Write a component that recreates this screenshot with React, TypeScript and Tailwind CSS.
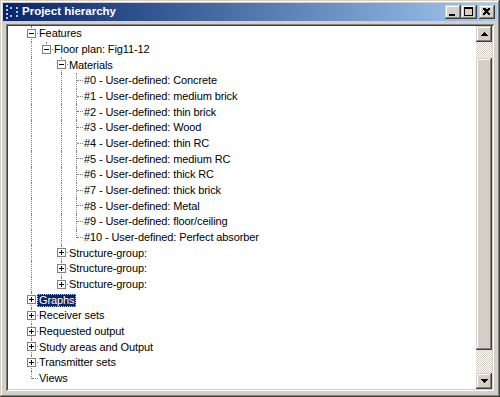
import React from 'react';

type Row = {
  label: string;
  depth: number;
  box?: 'minus' | 'plus';
  last?: boolean;
  cont: boolean[];
  selected?: boolean;
};

const materials = [
  'Concrete',
  'medium brick',
  'thin brick',
  'Wood',
  'thin RC',
  'medium RC',
  'thick RC',
  'thick brick',
  'Metal',
  'floor/ceiling',
  'Perfect absorber',
];

const rows: Row[] = [
  { label: 'Features', depth: 0, box: 'minus', cont: [] },
  { label: 'Floor plan: Fig11-12', depth: 1, box: 'minus', last: true, cont: [true] },
  { label: 'Materials', depth: 2, box: 'minus', cont: [true, false] },
  ...materials.map((m, i) => ({
    label: `#${i} - User-defined: ${m}`,
    depth: 3,
    last: i === materials.length - 1,
    cont: [true, false, true],
  })),
  ...[0, 1, 2].map((i) => ({
    label: 'Structure-group:',
    depth: 2,
    box: 'plus' as const,
    last: i === 2,
    cont: [true, false],
  })),
  { label: 'Graphs', depth: 0, box: 'plus', cont: [], selected: true },
  { label: 'Receiver sets', depth: 0, box: 'plus', cont: [] },
  { label: 'Requested output', depth: 0, box: 'plus', cont: [] },
  { label: 'Study areas and Output', depth: 0, box: 'plus', cont: [] },
  { label: 'Transmitter sets', depth: 0, box: 'plus', cont: [] },
  { label: 'Views', depth: 0, last: true, cont: [] },
];

const bevel =
  'shadow-[inset_-1px_-1px_#404040,inset_1px_1px_#d4d0c8,inset_-2px_-2px_#808080,inset_2px_2px_#ffffff]';

function Guide({ on }: { on: boolean }) {
  return (
    <div className="relative w-[15px] h-full shrink-0">
      {on && <div className="absolute left-[7px] top-0 bottom-0 border-l border-dotted border-[#808080]" />}
    </div>
  );
}

function Expander({ kind }: { kind: 'minus' | 'plus' }) {
  return (
    <div className="absolute left-[3px] top-[3px] w-[9px] h-[9px] border border-[#808080] bg-white">
      <svg width="7" height="7" className="block" shapeRendering="crispEdges">
        <rect x="1" y="3" width="5" height="1" fill="#000" />
        {kind === 'plus' && <rect x="3" y="1" width="1" height="5" fill="#000" />}
      </svg>
    </div>
  );
}

function Branch({ row }: { row: Row }) {
  return (
    <div className="relative w-[15px] h-full shrink-0">
      <div
        className={`absolute left-[7px] top-0 border-l border-dotted border-[#808080] ${
          row.last ? 'h-[8px]' : 'bottom-0'
        }`}
      />
      <div className="absolute left-[8px] right-[1px] top-[7px] border-t border-dotted border-[#808080]" />
      {row.box && <Expander kind={row.box} />}
    </div>
  );
}

function TreeRow({ row }: { row: Row }) {
  return (
    <div className="flex h-[15.68px] items-stretch">
      {row.cont.map((on, i) => (
        <Guide key={i} on={on} />
      ))}
      <Branch row={row} />
      <div className="flex items-center">
        {row.selected ? (
          <div className="-ml-[2px] h-[13px] border border-dotted border-[#c8c8a0] bg-[#0a246a]">
            <div className="px-[1px] leading-[11px] text-[#ffffff] whitespace-nowrap">{row.label}</div>
          </div>
        ) : (
          <span className="leading-[13px] whitespace-nowrap">{row.label}</span>
        )}
      </div>
    </div>
  );
}

function ArrowButton({ dir }: { dir: 'up' | 'down' }) {
  return (
    <div className={`h-[16px] shrink-0 bg-[#d4d0c8] ${bevel} flex items-center justify-center`}>
      <svg width="7" height="4" shapeRendering="crispEdges" className={dir === 'down' ? 'rotate-180' : ''}>
        <rect x="3" y="0" width="1" height="1" fill="#000" />
        <rect x="2" y="1" width="3" height="1" fill="#000" />
        <rect x="1" y="2" width="5" height="1" fill="#000" />
        <rect x="0" y="3" width="7" height="1" fill="#000" />
      </svg>
    </div>
  );
}

function Track({ className }: { className: string }) {
  return (
    <div
      className={`${className} shrink-0 bg-[image:repeating-conic-gradient(#ffffff_0%_25%,#d4d0c8_0%_50%)] bg-[length:2px_2px]`}
    />
  );
}

function CaptionButton({ kind, className = '' }: { kind: 'min' | 'max' | 'close'; className?: string }) {
  return (
    <div className={`w-[16px] h-[14px] bg-[#d4d0c8] ${bevel} relative shrink-0 ${className}`}>
      <svg width="16" height="14" className="block" shapeRendering="crispEdges">
        {kind === 'min' && <rect x="4" y="9" width="6" height="2" fill="#000" />}
        {kind === 'max' && (
          <g fill="#000">
            <rect x="3" y="2" width="9" height="2" />
            <rect x="3" y="4" width="1" height="7" />
            <rect x="11" y="4" width="1" height="7" />
            <rect x="3" y="10" width="9" height="1" />
          </g>
        )}
        {kind === 'close' && (
          <path d="M4 3h2l1.5 1.5L9 3h2v1L9 6.5 11 9v1H9L7.5 8 6 10H4V9l2-2.5L4 4z" fill="#000" />
        )}
      </svg>
    </div>
  );
}

function AppIcon() {
  const dots = [
    [2, 1], [2, 5], [2, 9], [2, 13],
    [6, 3], [12, 3], [12, 7], [12, 11], [6, 11],
  ];
  return (
    <svg width="16" height="16" className="block shrink-0" shapeRendering="crispEdges">
      {dots.map(([x, y], i) => (
        <rect key={i} x={x} y={y} width="2" height="2" fill="#a6caf0" />
      ))}
    </svg>
  );
}

export default function App() {
  return (
    <div
      className={`w-[500px] h-[397px] bg-[#d4d0c8] ${bevel} p-[3px] flex flex-col font-['Liberation_Sans',Arial,sans-serif] select-none`}
    >
      <div className="h-[18px] shrink-0 flex items-center bg-linear-to-r from-[#0a246a] to-[#a6caf0] pl-[1px] pr-[2px]">
        <AppIcon />
        <span className="ml-[2px] text-[11.5px] font-bold text-white leading-none">Project hierarchy</span>
        <div className="ml-auto flex items-center">
          <CaptionButton kind="min" />
          <CaptionButton kind="max" />
          <CaptionButton kind="close" className="ml-[2px]" />
        </div>
      </div>

      <div className="flex-1 m-[3px] p-[2px] flex shadow-[inset_1px_1px_#808080,inset_-1px_-1px_#ffffff,inset_2px_2px_#404040,inset_-2px_-2px_#d4d0c8]">
        <div className="flex-1 bg-white overflow-hidden pl-[16px] text-[11px] tracking-[-0.1px] text-black">
          {rows.map((row, i) => (
            <TreeRow key={i} row={row} />
          ))}
        </div>
        <div className="w-[16px] shrink-0 flex flex-col">
          <ArrowButton dir="up" />
          <Track className="h-[16px]" />
          <div className={`flex-1 bg-[#d4d0c8] ${bevel}`} />
          <Track className="h-[23px]" />
          <ArrowButton dir="down" />
        </div>
      </div>
    </div>
  );
}
